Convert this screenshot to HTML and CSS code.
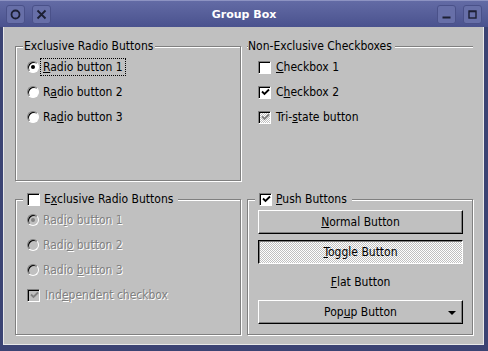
FILE: index.html
```html
<!DOCTYPE html>
<html lang="en">
<head>
    <meta charset="UTF-8">
    <title>Group Box</title>
    <link rel="stylesheet" href="styles.css">
</head>
<body>
<div class="window">
    <div class="titlebar">
        <div class="tb-buttons">
            <span class="tb-btn"><svg width="17" height="17" viewBox="0 0 17 17"><circle cx="8.5" cy="8.5" r="4" fill="none" stroke="#1c1f33" stroke-width="1.8"/></svg></span>
            <span class="tb-btn"><svg width="17" height="17" viewBox="0 0 17 17"><path d="M4.5 4.5 L12.5 12.5 M12.5 4.5 L4.5 12.5" stroke="#1c1f33" stroke-width="1.8"/></svg></span>
        </div>
        <div class="tb-title">Group Box</div>
        <div class="tb-buttons">
            <span class="tb-btn"><svg width="17" height="17" viewBox="0 0 17 17"><path d="M4.5 11.5 H12.5" stroke="#1c1f33" stroke-width="2"/></svg></span>
            <span class="tb-btn"><svg width="17" height="17" viewBox="0 0 17 17"><rect x="5" y="5" width="7" height="7" fill="none" stroke="#1c1f33" stroke-width="1.4"/><path d="M5 5.6 H12" stroke="#1c1f33" stroke-width="1.4"/></svg></span>
        </div>
    </div>

    <div class="client">
        <fieldset class="group">
            <legend>Exclusive Radio Buttons</legend>
            <div class="group-body">
                <label class="option"><span class="radio checked"></span><span class="text focus"><u>R</u>adio button 1</span></label>
                <label class="option"><span class="radio"></span><span class="text">R<u>a</u>dio button 2</span></label>
                <label class="option"><span class="radio"></span><span class="text">Ra<u>d</u>io button 3</span></label>
            </div>
        </fieldset>

        <fieldset class="group flat">
            <legend>Non-Exclusive Checkboxes</legend>
            <div class="group-body">
                <label class="option"><span class="check"></span><span class="text"><u>C</u>heckbox 1</span></label>
                <label class="option"><span class="check"><svg width="9" height="9" viewBox="0 0 9 9"><path d="M1 3.5 L3.5 6 L8 1.5" fill="none" stroke="#000" stroke-width="1.8"/></svg></span><span class="text">C<u>h</u>eckbox 2</span></label>
                <label class="option"><span class="check tristate"><svg width="9" height="9" viewBox="0 0 9 9"><path d="M1 3.5 L3.5 6 L8 1.5" fill="none" stroke="#808080" stroke-width="1.8"/></svg></span><span class="text">Tri-<u>s</u>tate button</span></label>
            </div>
        </fieldset>

        <fieldset class="group">
            <legend class="check-legend"><span class="check"></span><span>E<u>x</u>clusive Radio Buttons</span></legend>
            <div class="group-body disabled">
                <label class="option"><span class="radio checked"></span><span class="text">Rad<u>i</u>o button 1</span></label>
                <label class="option"><span class="radio"></span><span class="text">Radi<u>o</u> button 2</span></label>
                <label class="option"><span class="radio"></span><span class="text">Radio <u>b</u>utton 3</span></label>
                <label class="option"><span class="check"><svg width="9" height="9" viewBox="0 0 9 9"><path d="M1 3.5 L3.5 6 L8 1.5" fill="none" stroke="#808080" stroke-width="1.8"/></svg></span><span class="text">Ind<u>e</u>pendent checkbox</span></label>
            </div>
        </fieldset>

        <fieldset class="group">
            <legend class="check-legend"><span class="check"><svg width="9" height="9" viewBox="0 0 9 9"><path d="M1 3.5 L3.5 6 L8 1.5" fill="none" stroke="#000" stroke-width="1.8"/></svg></span><span><u>P</u>ush Buttons</span></legend>
            <div class="button-list">
                <button class="push"><u>N</u>ormal Button</button>
                <button class="push toggled"><u>T</u>oggle Button</button>
                <button class="push flat-btn"><u>F</u>lat Button</button>
                <button class="push popup">Pop<u>u</u>p Button<span class="arrow"></span></button>
            </div>
        </fieldset>
    </div>
</div>
</body>
</html>
```

FILE: styles.css
```css
* {
    box-sizing: border-box;
}
html, body {
    margin: 0;
}
body {
    font-family: "DejaVu Sans Condensed", "DejaVu Sans", sans-serif;
    font-stretch: condensed;
    font-size: 12px;
    color: #000;
    background: #3b4373;
}
.window {
    width: 488px;
    height: 351px;
    display: flex;
    flex-direction: column;
}

/* title bar */
.titlebar {
    height: 27px;
    display: flex;
    align-items: center;
    padding: 0 6px;
    background: linear-gradient(#636ba5, #4a528e);
    border-top: 1px solid #8d93c2;
}
.tb-buttons {
    display: flex;
    gap: 7px;
}
.tb-btn {
    width: 19px;
    height: 19px;
    display: flex;
    align-items: center;
    justify-content: center;
    background: #676fa8;
    border: 1px solid #4a5189;
    border-radius: 3px;
}
.tb-title {
    flex: 1;
    text-align: center;
    color: #fff;
    font-family: "DejaVu Sans", sans-serif;
    font-stretch: normal;
    font-weight: bold;
    font-size: 11px;
}

/* client area */
.client {
    flex: 1;
    background: #c0c0c0;
    border: solid #3b4373;
    border-width: 0 4px 6px 3px;
    box-shadow: inset 1px 0 #e8e8e8, inset -1px -1px #e8e8e8;
    display: grid;
    grid-template-columns: 226px 226px;
    grid-template-rows: 143px 144px;
    column-gap: 6px;
    row-gap: 10px;
    padding: 11px 0 0 12px;
}

/* group boxes */
.group {
    margin: 0;
    padding: 0;
    min-width: 0;
    border: 1px solid #808080;
    box-shadow: inset 1px 1px #fff, 1px 1px #fff;
}
.group legend {
    margin-left: 7px;
    padding: 0 2px 0 1px;
    line-height: 16px;
    background: #c0c0c0;
}
.group.flat {
    border-width: 1px 0 0;
    box-shadow: inset 0 1px #fff;
}
.group.flat legend {
    margin-left: 1px;
    padding: 0 3px 0 0;
}
.group legend.check-legend {
    display: flex;
    align-items: center;
    gap: 4px;
    padding: 0 5px 0 4px;
}
.group-body {
    display: flex;
    flex-direction: column;
    gap: 5px;
    padding: 3px 0 0 11px;
}
.option {
    display: flex;
    align-items: center;
    height: 20px;
    gap: 1px;
}
.option .text {
    padding: 1px 2px;
    border: 1px dotted transparent;
}
.option .text.focus {
    border-color: #000;
}

/* indicators */
.radio {
    position: relative;
    width: 12px;
    height: 12px;
    border-radius: 50%;
    background: #fff;
    border: 1px solid;
    border-color: #808080 #fff #fff #808080;
    box-shadow: inset 1px 1px #000;
}
.radio.checked::after {
    content: "";
    position: absolute;
    left: 3px;
    top: 3px;
    width: 4px;
    height: 4px;
    border-radius: 50%;
    background: #000;
}
.check {
    width: 13px;
    height: 13px;
    display: flex;
    align-items: center;
    justify-content: center;
    background: #fff;
    border: 1px solid;
    border-color: #808080 #fff #fff #808080;
    box-shadow: inset 1px 1px #000;
    flex: none;
}
.group-body .check + .text {
    margin-left: 1px;
}
.check svg {
    margin: 1px 0 0 1px;
}
.check.tristate {
    background: repeating-conic-gradient(#fff 0 25%, #c0c0c0 0 50%) 0 0 / 2px 2px;
}

/* disabled state */
.disabled .text {
    color: #808080;
    text-shadow: 1px 1px 0 #fff;
}
.disabled .radio,
.disabled .check {
    background: #c0c0c0;
}
.disabled .radio.checked::after {
    background: #808080;
}

/* push buttons */
.button-list {
    display: flex;
    flex-direction: column;
    gap: 6px;
    padding: 3px 9px 0 10px;
}
.push {
    position: relative;
    height: 24px;
    font: inherit;
    color: #000;
    background: #c0c0c0;
    border: 1px solid;
    border-color: #fff #000 #000 #fff;
    box-shadow: inset -1px -1px #808080;
    padding: 0;
}
.push.toggled {
    border-color: #000 #fff #fff #000;
    box-shadow: inset 1px 1px #808080;
    background: repeating-conic-gradient(#fff 0 25%, #c0c0c0 0 50%) 0 0 / 2px 2px;
}
.push.flat-btn {
    border-color: transparent;
    box-shadow: none;
    background: transparent;
}
.push .arrow {
    position: absolute;
    right: 6px;
    top: 10px;
    border: 4px solid transparent;
    border-top: 4px solid #000;
    border-bottom: 0;
}
```
